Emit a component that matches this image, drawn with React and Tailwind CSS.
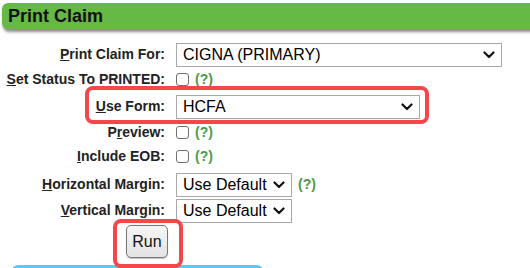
import React from 'react';

function Chevron() {
  return (
    <svg width="12" height="8" viewBox="0 0 12 8" className="shrink-0">
      <path d="M1.5 1.5 L6 6 L10.5 1.5" fill="none" stroke="#111" strokeWidth="2.2" strokeLinecap="round" strokeLinejoin="round" />
    </svg>
  );
}

function Select({ value, width }) {
  return (
    <div
      className="h-[24px] border border-[#a9a9a9] bg-white flex items-center justify-between pl-[6px] pr-[6px] text-[16px] text-black"
      style={{ width }}
    >
      <span className="leading-none">{value}</span>
      <Chevron />
    </div>
  );
}

function Checkbox() {
  return <div className="w-[13px] h-[13px] border border-[#6f6f6f] rounded-[3px] bg-white" />;
}

function Help() {
  return <span className="ml-[6px] text-[14px] font-bold text-[#4a9c4a]">(?)</span>;
}

function Row({ h, label, children }) {
  return (
    <div className={`flex items-center ${h}`}>
      <div className="w-[165px] text-right text-[14px] font-bold text-[#222] whitespace-nowrap">{label}</div>
      <div className="ml-[11px] flex items-center">{children}</div>
    </div>
  );
}

export default function App() {
  return (
    <div className="relative w-[530px] h-[268px] overflow-hidden bg-white font-['Liberation_Sans',Arial,sans-serif]">
      {/* Header */}
      <div className="ml-[2px] mt-[3px] h-[26px] w-[540px] bg-[#67b946] rounded-l-[6px] shadow-[1px_3px_3px_rgba(0,0,0,0.45)] flex items-center pl-[6px]">
        <span className="text-[18px] font-bold text-[#111]">Print Claim</span>
      </div>

      <div className="mt-[12px]">
        <Row h="h-[27px]" label={<><u>P</u>rint Claim For:</>}>
          <Select value="CIGNA (PRIMARY)" width={326} />
        </Row>
        <Row h="h-[22px]" label={<><u>S</u>et Status To PRINTED:</>}>
          <Checkbox />
          <Help />
        </Row>
        <Row h="h-[33px]" label={<><u>U</u>se Form:</>}>
          <Select value="HCFA" width={244} />
        </Row>
        <Row h="h-[18px]" label={<>P<u>r</u>eview:</>}>
          <Checkbox />
          <Help />
        </Row>
        <Row h="h-[30px]" label={<><u>I</u>nclude EOB:</>}>
          <Checkbox />
          <Help />
        </Row>
        <Row h="h-[27px]" label={<><u>H</u>orizontal Margin:</>}>
          <Select value="Use Default" width={116} />
          <Help />
        </Row>
        <Row h="h-[25px]" label={<><u>V</u>ertical Margin:</>}>
          <Select value="Use Default" width={116} />
        </Row>
        <div className="h-[37px] flex items-center pl-[126px]">
          <button className="w-[42px] h-[33px] rounded-[5px] border border-[#767676] bg-gradient-to-b from-[#f6f6f6] to-[#e3e3e3] shadow-[0_1px_1px_rgba(0,0,0,0.25)] text-[16px] text-[#111]">
            Run
          </button>
        </div>
        <div className="mt-[5px] ml-[12px] w-[251px] h-[8px] bg-[#5cc8f3] rounded-t-[6px]" />
      </div>

      {/* annotation boxes */}
      <div className="absolute left-[85px] top-[86px] w-[344px] h-[38px] border-[4px] border-[#f5474a] rounded-[8px] pointer-events-none" />
      <div className="absolute left-[113px] top-[219px] w-[70px] h-[49px] border-[4px] border-[#f5474a] rounded-[8px] pointer-events-none" />
    </div>
  );
}
